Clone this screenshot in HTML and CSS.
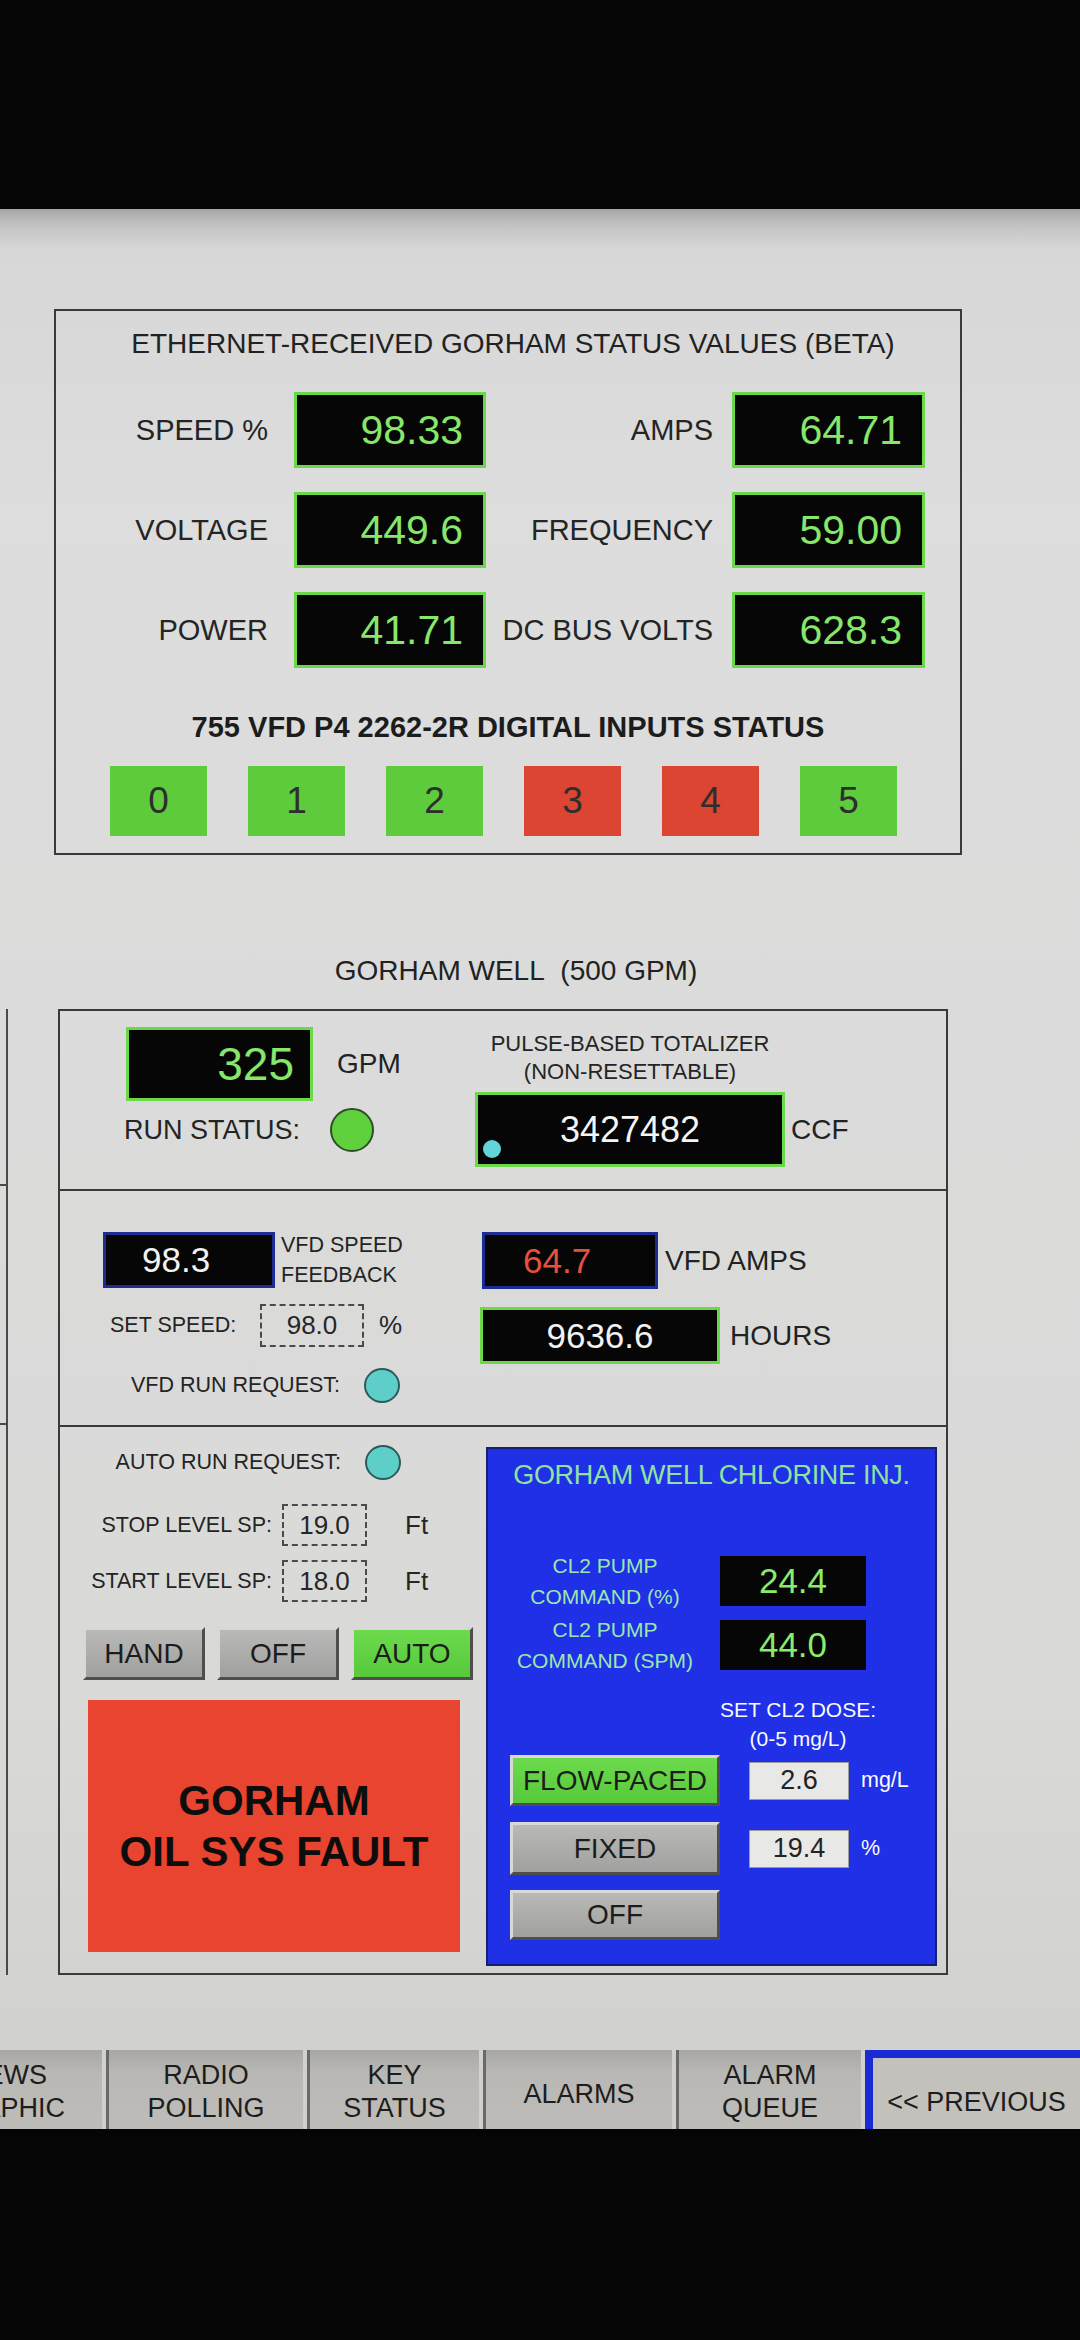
FILE: index.html
```html
<!DOCTYPE html>
<html>
<head>
<meta charset="utf-8">
<title>Gorham Well HMI</title>
<link rel="stylesheet" href="styles.css">
</head>
<body>
<div class="black-top"></div>
<div class="screen">
  <section class="panel status">
    <h1 class="status-title">ETHERNET-RECEIVED GORHAM STATUS VALUES (BETA)</h1>
    <div class="status-grid">
      <div class="lbl a">SPEED %</div><div class="readout g val-big">98.33</div>
      <div class="lbl b">AMPS</div><div class="readout g val-big">64.71</div>
      <div class="lbl a">VOLTAGE</div><div class="readout g val-big">449.6</div>
      <div class="lbl b">FREQUENCY</div><div class="readout g val-big">59.00</div>
      <div class="lbl a">POWER</div><div class="readout g val-big">41.71</div>
      <div class="lbl b">DC BUS VOLTS</div><div class="readout g val-big">628.3</div>
    </div>
    <h2 class="di-title">755 VFD P4 2262-2R DIGITAL INPUTS STATUS</h2>
    <div class="di-row">
      <div class="di on">0</div>
      <div class="di on">1</div>
      <div class="di on">2</div>
      <div class="di off">3</div>
      <div class="di off">4</div>
      <div class="di on">5</div>
    </div>
  </section>

  <div class="well-title">GORHAM WELL&nbsp; (500 GPM)</div>

  <div class="well-row">
    <div class="stub"><div class="stub-seg s1"></div><div class="stub-seg s2"></div></div>
    <section class="panel well">
      <div class="sub sub1">
        <div class="s1-left">
          <div class="gpm-row">
            <div class="readout g gpm">325</div>
            <span class="unit-lbl">GPM</span>
          </div>
          <div class="run-row">
            <span class="run-lbl">RUN STATUS:</span>
            <span class="lamp green"></span>
          </div>
        </div>
        <div class="s1-right">
          <div class="tot-lbl">PULSE-BASED TOTALIZER<br>(NON-RESETTABLE)</div>
          <div class="tot-row">
            <div class="readout g tot">3427482<span class="tot-dot"></span></div>
            <span class="unit-lbl ccf">CCF</span>
          </div>
        </div>
      </div>

      <div class="sub sub2">
        <div class="s2-left">
          <div class="fb-row">
            <div class="readout bl white-val">98.3</div>
            <div class="small-lbl fb-lbl">VFD SPEED<br>FEEDBACK</div>
          </div>
          <div class="set-row">
            <span class="small-lbl set-lbl">SET SPEED:</span>
            <span class="dash-box set-box">98.0</span>
            <span class="pct">%</span>
          </div>
          <div class="vrr-row">
            <span class="small-lbl vrr-lbl">VFD RUN REQUEST:</span>
            <span class="lamp cyan"></span>
          </div>
        </div>
        <div class="s2-right">
          <div class="amps-row">
            <div class="readout bl red-val">64.7</div>
            <span class="unit-lbl amps-lbl">VFD AMPS</span>
          </div>
          <div class="hours-row">
            <div class="readout g hours">9636.6</div>
            <span class="unit-lbl hours-lbl">HOURS</span>
          </div>
        </div>
      </div>

      <div class="sub sub3">
        <div class="s3-left">
          <div class="req-row">
            <span class="small-lbl req-lbl">AUTO RUN REQUEST:</span>
            <span class="lamp cyan"></span>
          </div>
          <div class="sp-row first">
            <span class="small-lbl sp-lbl">STOP LEVEL SP:</span>
            <span class="dash-box sp-box">19.0</span>
            <span class="ft">Ft</span>
          </div>
          <div class="sp-row">
            <span class="small-lbl sp-lbl">START LEVEL SP:</span>
            <span class="dash-box sp-box">18.0</span>
            <span class="ft">Ft</span>
          </div>
          <div class="mode-row">
            <div class="btn mode">HAND</div>
            <div class="btn mode">OFF</div>
            <div class="btn mode green">AUTO</div>
          </div>
          <div class="fault">GORHAM<br>OIL SYS FAULT</div>
        </div>

        <div class="chl">
          <div class="chl-title">GORHAM WELL CHLORINE INJ.</div>
          <div class="cl2-row r1">
            <div class="cl2-lbl">CL2 PUMP<br>COMMAND (%)</div>
            <div class="readout cl2-val">24.4</div>
          </div>
          <div class="cl2-row r2">
            <div class="cl2-lbl">CL2 PUMP<br>COMMAND (SPM)</div>
            <div class="readout cl2-val">44.0</div>
          </div>
          <div class="dose-lbl">SET CL2 DOSE:<br>(0-5 mg/L)</div>
          <div class="ctl-row c1">
            <div class="btn ctl green h51">FLOW-PACED</div>
            <div class="dose-in">2.6</div>
            <span class="dose-unit">mg/L</span>
          </div>
          <div class="ctl-row c2">
            <div class="btn ctl h53">FIXED</div>
            <div class="dose-in">19.4</div>
            <span class="dose-unit">%</span>
          </div>
          <div class="ctl-row c3">
            <div class="btn ctl h50">OFF</div>
          </div>
        </div>
      </div>
    </section>
  </div>

  <nav class="tabs">
    <div class="tab t1 two">VIEWS<br>GRAPHIC</div>
    <div class="tab t2 two">RADIO<br>POLLING</div>
    <div class="tab t3 two">KEY<br>STATUS</div>
    <div class="tab t4 one">ALARMS</div>
    <div class="tab t5 two">ALARM<br>QUEUE</div>
    <div class="tab t6 one">&lt;&lt; PREVIOUS</div>
  </nav>
</div>
<div class="black-bottom"></div>
</body>
</html>
```

FILE: styles.css
```css
body {
  margin: 0;
  width: 1080px;
  background: #040404;
  font-family: "Liberation Sans", Arial, sans-serif;
  color: #1f1f1f;
}

.black-top {
  height: 209px;
  background: #050505;
}

.black-bottom {
  height: 211px;
  background: #050505;
}

.screen {
  height: 1920px;
  overflow: hidden;
  background: linear-gradient(to bottom, #a6a7a6 0px, #c4c5c4 18px, #d6d7d6 40px, #dcdddc 300px, #d9dad8 1500px, #cfcfcc 1920px);
}

.panel {
  box-sizing: border-box;
  border: 2px solid #3a3a3a;
}

/* ---------- status panel ---------- */
.status {
  margin: 100px 0 0 54px;
  width: 908px;
  height: 546px;
  padding-top: 15px;
}

.status-title {
  margin: 0;
  padding-left: 10px;
  font-weight: normal;
  font-size: 28px;
  line-height: 36px;
  text-align: center;
  color: #222;
}

.status-grid {
  display: grid;
  grid-template-columns: 238px 192px 246px 193px;
  grid-auto-rows: 76px;
  row-gap: 24px;
  margin-top: 30px;
}

.lbl {
  display: flex;
  align-items: center;
  justify-content: flex-end;
  font-size: 29px;
  color: #242424;
}
.lbl.a { padding-right: 26px; }
.lbl.b { padding-right: 19px; }

.readout {
  box-sizing: border-box;
  background: #060606;
  display: flex;
  align-items: center;
}
.readout.g { border: 3px solid #6bd84a; }
.readout.bl { border: 3px solid #1d2c92; }

.val-big {
  justify-content: flex-end;
  padding-right: 20px;
  font-size: 41px;
  color: #86e76b;
}

.di-title {
  margin: 41px 0 0;
  font-size: 29px;
  line-height: 36px;
  font-weight: bold;
  text-align: center;
  color: #1c1c1c;
}

.di-row {
  display: flex;
  gap: 41px;
  margin: 21px 0 0 54px;
}

.di {
  width: 97px;
  height: 70px;
  display: flex;
  align-items: center;
  justify-content: center;
  font-size: 37px;
  color: #2e2e2e;
}
.di.on { background: #5dcb3c; }
.di.off { background: #dc4532; }

/* ---------- well ---------- */
.well-title {
  margin: 98px 0 0 58px;
  width: 890px;
  padding-left: 26px;
  box-sizing: border-box;
  text-align: center;
  font-size: 28px;
  line-height: 36px;
  color: #222;
}

.well-row {
  display: flex;
  margin-top: 20px;
}

.stub {
  width: 8px;
  height: 966px;
  box-sizing: border-box;
  border-right: 2px solid #4a4a4a;
}
.stub-seg { border-bottom: 2px solid #4a4a4a; }
.stub-seg.s1 { height: 175px; }
.stub-seg.s2 { height: 237px; }

.well {
  margin-left: 50px;
  width: 890px;
  height: 966px;
  display: flex;
  flex-direction: column;
}

.sub {
  display: flex;
  box-sizing: border-box;
  border-bottom: 2px solid #3a3a3a;
}
.sub1 { height: 180px; }
.sub2 { height: 236px; }
.sub3 { flex: 1; border-bottom: none; }

.unit-lbl { font-size: 28px; color: #222; }

.s1-left {
  margin-left: 66px;
  width: 349px;
  padding-top: 16px;
}
.gpm-row { display: flex; align-items: center; gap: 24px; }
.readout.gpm {
  width: 187px;
  height: 74px;
  justify-content: flex-end;
  padding-right: 16px;
  font-size: 46px;
  color: #86e76b;
}
.run-row {
  display: flex;
  align-items: center;
  height: 44px;
  margin-top: 7px;
}
.run-lbl { font-size: 27px; color: #242424; margin-left: -2px; }

.lamp {
  display: block;
  box-sizing: border-box;
  border-radius: 50%;
}
.lamp.green {
  width: 44px;
  height: 44px;
  margin-left: 30px;
  background: #5fd13c;
  border: 2px solid #2f4d2c;
}
.lamp.cyan {
  width: 36px;
  height: 35px;
  margin-left: 24px;
  background: #5ecfc8;
  border: 2px solid #2d5b5a;
}

.s1-right { padding-top: 19px; }
.tot-lbl {
  width: 310px;
  text-align: center;
  font-size: 22px;
  line-height: 28px;
  color: #242424;
}
.tot-row { display: flex; align-items: center; margin-top: 6px; }
.readout.tot {
  position: relative;
  width: 310px;
  height: 75px;
  justify-content: center;
  font-size: 36px;
  color: #f4f4f4;
}
.tot-dot {
  position: absolute;
  left: 5px;
  bottom: 6px;
  width: 18px;
  height: 18px;
  border-radius: 50%;
  background: #63d4dc;
}
.ccf { margin-left: 6px; }

.small-lbl { font-size: 21.5px; color: #242424; }

.s2-left {
  margin-left: 43px;
  width: 377px;
  padding-top: 39px;
}
.fb-row { display: flex; align-items: center; }
.white-val {
  width: 172px;
  height: 56px;
  padding-left: 36px;
  font-size: 35px;
  color: #f2f2f2;
}
.fb-lbl { margin-left: 6px; line-height: 30px; }

.set-row { display: flex; align-items: center; margin-top: 14px; }
.set-lbl { margin-left: 7px; width: 150px; }
.dash-box {
  box-sizing: border-box;
  display: flex;
  align-items: center;
  justify-content: center;
  border: 2px dashed #4a4a4a;
  font-size: 26px;
  color: #262626;
}
.set-box { width: 104px; height: 43px; }
.pct { margin-left: 15px; font-size: 26px; color: #262626; }

.vrr-row { display: flex; align-items: center; margin-top: 21px; }
.vrr-lbl { margin-left: 28px; }

.s2-right { padding-top: 41px; }
.amps-row { display: flex; align-items: center; }
.red-val {
  margin-left: 2px;
  width: 176px;
  height: 57px;
  padding-left: 38px;
  font-size: 35px;
  color: #e5513d;
}
.amps-lbl { margin-left: 7px; }
.hours-row { display: flex; align-items: center; margin-top: 18px; }
.readout.hours {
  width: 240px;
  height: 57px;
  justify-content: center;
  font-size: 35px;
  color: #f2f2f2;
}
.hours-lbl { margin-left: 10px; }

.s3-left {
  margin-left: 23px;
  width: 390px;
  padding-top: 18px;
}
.req-row { display: flex; align-items: center; }
.req-lbl { width: 258px; text-align: right; }

.sp-row { display: flex; align-items: center; margin-top: 14px; }
.sp-row.first { margin-top: 24px; }
.sp-lbl { width: 189px; text-align: right; }
.sp-box { margin-left: 10px; width: 85px; height: 42px; }
.ft { margin-left: 38px; font-size: 26px; color: #262626; }

.mode-row { display: flex; gap: 12px; margin-top: 25px; }

.btn {
  box-sizing: border-box;
  display: flex;
  align-items: center;
  justify-content: center;
  background: linear-gradient(to bottom, #b9b9b7, #a0a09e);
  border: 3px solid;
  border-color: #d8d8d6 #4e4e4c #4e4e4c #d8d8d6;
  font-size: 28px;
  color: #1c1c1c;
}
.btn.green { background: linear-gradient(to bottom, #6cda4c, #58c93c); }
.btn.mode { width: 122px; height: 53px; }

.fault {
  margin: 20px 0 0 5px;
  width: 372px;
  height: 252px;
  display: flex;
  align-items: center;
  justify-content: center;
  text-align: center;
  background: #e8442f;
  font-weight: bold;
  font-size: 42px;
  line-height: 51px;
  color: #0d0d0d;
}

.chl {
  margin: 20px 0 0 13px;
  width: 451px;
  height: 519px;
  box-sizing: border-box;
  background: #1f30e6;
  border: 2px solid #15206e;
  padding-top: 9px;
}
.chl-title {
  font-size: 27px;
  line-height: 34px;
  text-align: center;
  color: #8fe3a0;
  letter-spacing: -0.3px;
}
.cl2-row { display: flex; align-items: flex-start; }
.cl2-row.r1 { margin-top: 58px; }
.cl2-row.r2 { margin-top: 2px; }
.cl2-lbl {
  margin-left: 17px;
  width: 200px;
  text-align: center;
  font-size: 21px;
  line-height: 31px;
  color: #9be6ae;
}
.cl2-val {
  margin: 6px 0 0 15px;
  width: 146px;
  height: 50px;
  justify-content: center;
  font-size: 35px;
  color: #8aeb6c;
}
.dose-lbl {
  margin: 19px 0 0 210px;
  width: 200px;
  text-align: center;
  font-size: 21px;
  line-height: 29px;
  color: #fafafa;
}
.ctl-row { display: flex; align-items: center; margin-left: 22px; }
.ctl-row.c1 { margin-top: 2px; }
.ctl-row.c2 { margin-top: 16px; }
.ctl-row.c3 { margin-top: 15px; }
.btn.ctl { width: 210px; }
.h51 { height: 51px; }
.h53 { height: 53px; }
.h50 { height: 50px; }
.dose-in {
  box-sizing: border-box;
  margin-left: 29px;
  width: 100px;
  height: 38px;
  display: flex;
  align-items: center;
  justify-content: center;
  background: #e8e8e6;
  border: 1px solid #9a9a9a;
  font-size: 27px;
  color: #222;
}
.dose-unit { margin-left: 12px; font-size: 21.5px; color: #fafafa; }

/* ---------- tabs ---------- */
.tabs {
  display: flex;
  gap: 4px;
  margin-top: 75px;
  height: 79px;
}
.tab {
  box-sizing: border-box;
  height: 79px;
  text-align: center;
  font-size: 27px;
  line-height: 33px;
  color: #1d1d1d;
  background: linear-gradient(to bottom, #a9a7a3, #bab8b4 30%, #bebcb8);
  border-left: 3px solid #6a6965;
}
.tab.two { padding-top: 9px; }
.tab.one { padding-top: 28px; }
.t1 { margin-left: -98px; width: 200px; }
.t2 { width: 197px; }
.t3 { width: 172px; }
.t4 { width: 189px; }
.t5 { width: 185px; }
.t6 {
  width: 215px;
  border-top: 8px solid #1b2bd4;
  border-left: 8px solid #1b2bd4;
  background: #c3c1bc;
  padding-top: 24px;
}
```
